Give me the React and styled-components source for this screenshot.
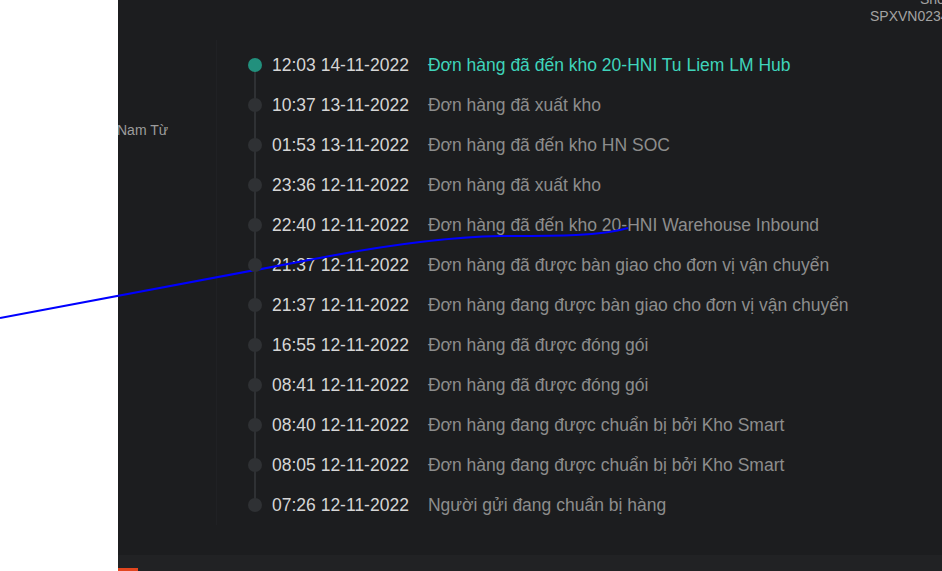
import React from 'react'
import styled, { createGlobalStyle } from 'styled-components'

const GlobalStyle = createGlobalStyle`
  html, body {
    margin: 0;
    padding: 0;
    background: #ffffff;
    font-family: "Liberation Sans", Arial, sans-serif;
  }
`

const Page = styled.div`
  display: flex;
  width: 942px;
  height: 571px;
  overflow: hidden;
`
const WhiteSide = styled.div`
  flex: 0 0 118px;
  background: #ffffff;
`
const Main = styled.div`
  flex: 1;
  display: flex;
  flex-direction: column;
  min-width: 0;
`
const Panel = styled.div`
  height: 555px;
  background: #1c1d1f;
  overflow: hidden;
  display: flex;
  flex-direction: column;
`
const Footer = styled.div`
  flex: 1;
  background: #212224;
  display: flex;
  align-items: flex-end;
`
const OrangeTab = styled.div`
  width: 20px;
  height: 3px;
  background: #e2461f;
`
const TopInfo = styled.div`
  display: flex;
  flex-direction: column;
  margin-top: -9px;
  margin-left: 752px;
  font-size: 14px;
  line-height: 17px;
  color: #a3a3a3;
  white-space: nowrap;
`
const InfoLine = styled.div`
  padding-left: ${(p) => p.indent || 0}px;
`
const Body = styled.div`
  display: flex;
  margin-top: 15px;
`
const AddressCol = styled.div`
  flex: 0 0 98px;
  border-right: 1px solid #202124;
  padding-top: 82px;
  overflow: hidden;
  font-size: 14px;
  line-height: 17px;
  color: #9c9c9c;
  white-space: nowrap;
`
const AddressText = styled.span`
  display: block;
  margin-left: -1px;
`
const Timeline = styled.ul`
  list-style: none;
  margin: 0;
  padding: 5px 0 0 31px;
`
const Row = styled.li`
  position: relative;
  display: flex;
  align-items: center;
  height: 40px;
  font-size: 17.5px;
  white-space: nowrap;

  &:not(:last-child)::after {
    content: '';
    position: absolute;
    left: 6px;
    top: 20px;
    width: 2px;
    height: 40px;
    background: #2f3134;
  }
`
const Dot = styled.span`
  position: relative;
  z-index: 1;
  width: 14px;
  height: 14px;
  border-radius: 50%;
  background: ${(p) => (p.active ? '#22907d' : '#2f3134')};
  margin-right: 10px;
`
const Time = styled.span`
  color: #d6d6d6;
`
const Desc = styled.span`
  margin-left: 19px;
  color: ${(p) => (p.active ? '#3fd4bb' : '#8d8d8d')};
`
const Scribble = styled.svg`
  position: absolute;
  left: 0;
  top: 0;
  pointer-events: none;
`

const events = [
  ['12:03 14-11-2022', 'Đơn hàng đã đến kho 20-HNI Tu Liem LM Hub'],
  ['10:37 13-11-2022', 'Đơn hàng đã xuất kho'],
  ['01:53 13-11-2022', 'Đơn hàng đã đến kho HN SOC'],
  ['23:36 12-11-2022', 'Đơn hàng đã xuất kho'],
  ['22:40 12-11-2022', 'Đơn hàng đã đến kho 20-HNI Warehouse Inbound'],
  ['21:37 12-11-2022', 'Đơn hàng đã được bàn giao cho đơn vị vận chuyển'],
  ['21:37 12-11-2022', 'Đơn hàng đang được bàn giao cho đơn vị vận chuyển'],
  ['16:55 12-11-2022', 'Đơn hàng đã được đóng gói'],
  ['08:41 12-11-2022', 'Đơn hàng đã được đóng gói'],
  ['08:40 12-11-2022', 'Đơn hàng đang được chuẩn bị bởi Kho Smart'],
  ['08:05 12-11-2022', 'Đơn hàng đang được chuẩn bị bởi Kho Smart'],
  ['07:26 12-11-2022', 'Người gửi đang chuẩn bị hàng'],
]

export default function App() {
  return (
    <>
      <GlobalStyle />
      <Page>
        <WhiteSide />
        <Main>
          <Panel>
            <TopInfo>
              <InfoLine indent={50}>Shopee Express</InfoLine>
              <InfoLine>SPXVN023456789012</InfoLine>
            </TopInfo>
            <Body>
              <AddressCol>
                <AddressText>Nam Từ</AddressText>
              </AddressCol>
              <Timeline>
                {events.map(([time, desc], i) => (
                  <Row key={i}>
                    <Dot active={i === 0} />
                    <Time>{time}</Time>
                    <Desc active={i === 0}>{desc}</Desc>
                  </Row>
                ))}
              </Timeline>
            </Body>
          </Panel>
          <Footer>
            <OrangeTab />
          </Footer>
        </Main>
      </Page>
      <Scribble width="942" height="571" viewBox="0 0 942 571">
        <path
          d="M0 318 L330 256 C 400 243, 450 237, 500 236 C 560 236, 600 236, 628 228"
          fill="none"
          stroke="#0000ff"
          strokeWidth="2.2"
        />
      </Scribble>
    </>
  )
}
